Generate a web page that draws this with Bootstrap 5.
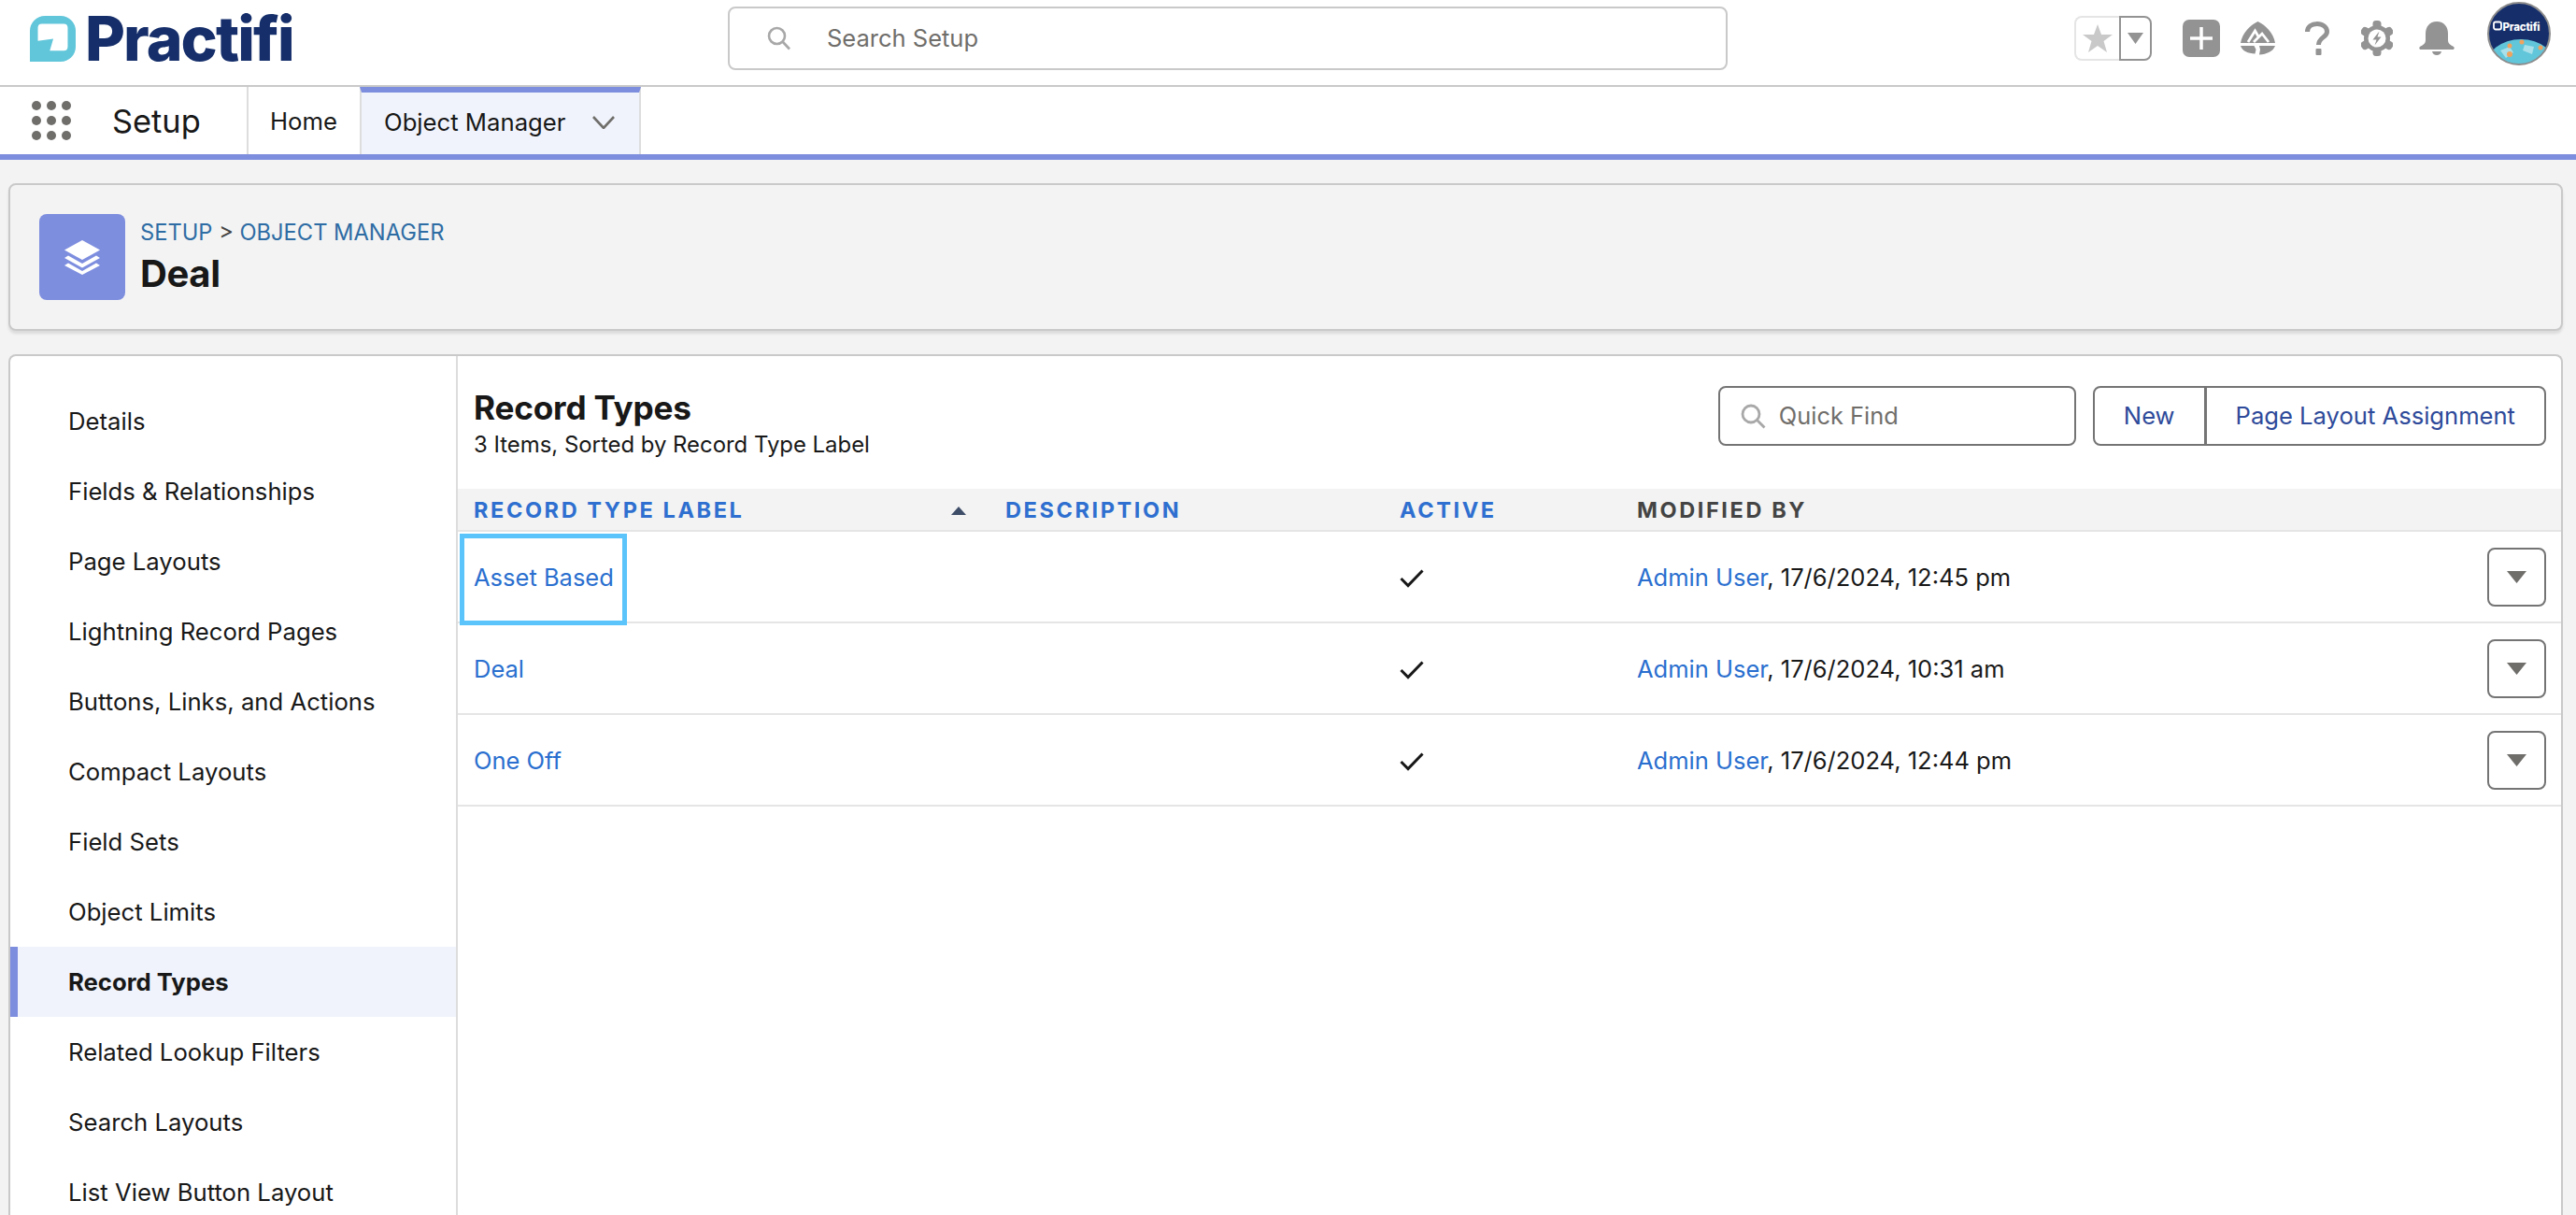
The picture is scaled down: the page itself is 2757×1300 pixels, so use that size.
<!DOCTYPE html>
<html lang="en">
<head>
<meta charset="utf-8">
<title>Record Types</title>
<link href="https://cdn.jsdelivr.net/npm/bootstrap@5.3.0/dist/css/bootstrap.min.css" rel="stylesheet">
<style>
html,body{height:1300px;overflow:hidden}
body{font-family:Inter,"Liberation Sans",sans-serif;font-size:25.700px;color:#181818;background:linear-gradient(#eceeef,#f3f3f3 120px,#f3f3f3);}
a{text-decoration:none}
.hdr-top{height:93px;padding-bottom:9px;background:#fff;border-bottom:2px solid #c9c9c9}
.logo-box{width:779px;padding-left:32px;gap:10px}
.logo-mark{width:49px;height:49px}
.logo-word{font-family:Inter,sans-serif;font-weight:800;font-size:66px;line-height:1;letter-spacing:-1.900px;color:#162f6b}
.search-box{width:1070px;height:68px;border:2px solid #c9c9c9;border-radius:8px;padding-left:40px;gap:38px;color:#706e6b;font-size:25.500px}
.search-box svg{width:26px;height:26px}
.hdr-icons{margin-left:auto;padding-right:27px}
.fav-group{width:83px;height:48px}
.fav-l{width:48px;border:2px solid #e5e5e5;border-right:0;border-radius:8px 0 0 8px}
.fav-r{width:35px;border:2px solid #939393;border-radius:0 8px 8px 0}
.ico-plus{margin-left:33px;width:40px;height:40px}
.ico-trail{margin-left:22px;width:37px;height:36px}
.ico-help{margin-left:32px;width:26px;height:36px}
.ico-gear{margin-left:34px;width:34px;height:38px}
.ico-bell{margin-left:28px;width:38px;height:36px}
.ico-avatar{margin-left:35px;width:68px;height:68px;margin-bottom:11px}
.hdr-nav{height:78px;background:#fff;border-bottom:6px solid #7e8edf}
.waffle{margin-left:34px;display:grid;grid-template-columns:repeat(3,10px);gap:6px;width:42px}
.waffle i{width:10px;height:10px;border-radius:50%;background:#706e6b;display:block}
.app-name{font-size:34.400px;margin-left:44px;width:144px;line-height:74px}
.tab-home{width:121px;border-left:2px solid #ddd;padding-left:23px;line-height:74px;color:#181818}
.tab-obj{width:301px;border-left:2px solid #ddd;border-right:2px solid #ddd;background:#f0f3fb;border-top:6px solid #7e8edf;padding-left:24px;padding-bottom:2px;color:#181818;line-height:64px}
.tab-obj svg{width:24px;height:14px;margin-left:28px}
.crumb-panel{margin:25px 14px 0 9px;height:158px;background:#f3f3f3;border:2px solid #c9c9c9;border-radius:8px;box-shadow:0 3px 3px rgba(0,0,0,.1);padding:31px;gap:16px}
.crumb-ico{width:92px;height:92px;background:#7e8edf;border-radius:8px}
.crumb-ico svg{width:38px;height:37px}
.crumb-line{font-size:23.700px;line-height:36px;color:#444;padding-top:2px}
.crumb-line a{color:#2e6ca4}
.crumb-title{font-size:40px;font-weight:700;line-height:48px;letter-spacing:-.4px;padding-top:2px}
.work-card{margin:25px 14px 0 9px;height:1000px;background:#fff;border:2px solid #c9c9c9;border-bottom:0;border-radius:8px 8px 0 0}
.side-col{width:479px;flex:none;border-right:2px solid #ddd;padding-top:32px}
.side-col .nav-link{height:75px;line-height:75px;padding:0 0 0 62px;color:#181818;font-size:25.700px}
.side-col .nav-link.cur{background:#f0f3fb;font-weight:700;box-shadow:inset 8px 0 0 #7e8edf}
.main-col{min-width:0;flex:1}
.main-head{padding:33px 16px 29px 17px}
.main-title{font-size:35.200px;font-weight:700;line-height:44px;letter-spacing:-.2px}
.main-sub{font-size:23.900px;line-height:36px}
.main-tools{gap:18px;margin-top:-1px}
.quick-find{width:383px;height:64px;border:2px solid #747474;border-radius:8px;padding-left:22px;gap:14px;background:#fff}
.quick-find svg{width:27px;height:27px;flex:none}
.quick-find input{border:0;outline:0;width:300px;font-size:25.400px;padding:0;color:#181818;background:transparent}
.quick-find input::placeholder{color:#706e6b;opacity:1}
.btn-group .tool-btn{height:64px;font-size:25.600px;border:2px solid #747474;border-radius:8px;background:#fff;color:#2e4a9a;padding:0 31px;line-height:60px}
.btn-group .tool-btn+.tool-btn{margin-left:-2px}
.rt-table{table-layout:fixed;width:100%;margin:0}
.rt-table.table>thead>tr>th{height:45px;padding:1px 0 0 17px;background:#f3f3f3;border-bottom:2px solid #e5e5e5;font-size:23.500px;font-weight:700;letter-spacing:2.600px;color:#2e6fd0;vertical-align:middle;position:relative;text-transform:uppercase}
.rt-table.table>thead>tr>th.dark{color:#444}
.rt-table.table>tbody>tr>td{height:98px;padding:2px 0 0 17px;border-bottom:2px solid #e5e5e5;font-size:25.500px;vertical-align:middle;color:#181818;position:relative}
.rt-table a{color:#2a6fcf}
.sort-tri{position:absolute;right:25px;top:19px;width:0;height:0;border:8px solid transparent;border-top:0;border-bottom:9px solid #3e4d68}
.focus-mark{position:absolute;left:2px;top:2px;width:179px;height:98px;border:5px solid #5bc4fa;pointer-events:none}
.chk{width:26px;height:20px;display:block;margin-top:2px}
.row-act{width:63px;height:63px;border:2px solid #747474;border-radius:8px;background:#fff;padding:0;margin:-2px 16px 0 0;flex:none}
.row-act svg{width:21px;height:13px;display:block;margin:auto}
.col-a{width:569px}.col-b{width:422px}.col-c{width:254px}
</style>
</head>
<body>
<header class="hdr-top d-flex align-items-center">
  <div class="logo-box d-flex align-items-center">
    <svg class="logo-mark" viewBox="0 0 46 46"><path fill="#61c6da" d="M15 0H31A15 15 0 0 1 46 15V31A15 15 0 0 1 31 46H0V15A15 15 0 0 1 15 0Z"/><path fill="#fff" d="M8 25V12Q8 8 12 8H34Q38 8 38 12V31Q38 35 34 35H20L23.500 23Z"/></svg>
    <span class="logo-word">Practifi</span>
  </div>
  <div class="search-box d-flex align-items-center">
    <svg viewBox="0 0 26 26" fill="none" stroke="#a8a8a8" stroke-width="2.600"><circle cx="10.500" cy="10.500" r="8.500"/><path d="M16.500 16.500L24 24.500"/></svg>
    <span>Search Setup</span>
  </div>
  <div class="hdr-icons d-flex align-items-center">
    <div class="fav-group d-flex">
      <div class="fav-l d-flex align-items-center justify-content-center"><svg width="32" height="31" viewBox="0 0 32 31"><path fill="#c9c9c9" d="M16 0L20 11H32L22.500 18L26 30L16 23L6 30L9.500 18L0 11H12Z"/></svg></div>
      <div class="fav-r d-flex align-items-center justify-content-center"><svg width="17" height="12" viewBox="0 0 17 12"><path fill="#939393" d="M0 0H17L8.500 12Z"/></svg></div>
    </div>
    <svg class="ico-plus" viewBox="0 0 40 40"><rect width="40" height="40" rx="7" fill="#939393"/><path d="M20 8V32M8 20H32" stroke="#fff" stroke-width="3.500"/></svg>
    <svg class="ico-trail" viewBox="0 0 37 36"><path fill="#939393" d="M18.500 0C27 4 35 12 37 23H0C2 12 10 4 18.500 0Z"/><path fill="#939393" d="M0 26H14.500L16.500 30L15.500 34.500C8 34 2 32 0 26ZM20 26H37C35 32 28 35 20 35.500L21 30Z"/><path fill="none" stroke="#fff" stroke-width="2.800" d="M8 22L15.500 10L19 16M14 22L23 13L30 22"/></svg>
    <svg class="ico-help" viewBox="0 0 26 36"><path fill="none" stroke="#939393" stroke-width="5" d="M2.500 11C2.500 5.500 7 2.500 13 2.500C19 2.500 23.500 6 23.500 11C23.500 17 14.500 17 14.500 25"/><rect x="11.500" y="29" width="6" height="7" rx="1" fill="#939393"/></svg>
    <svg class="ico-gear" viewBox="0 0 34 38"><g fill="#939393"><circle cx="17" cy="19" r="14"/><rect x="12.500" y="0" width="9" height="38" rx="3.500"/><rect x="12.500" y="0" width="9" height="38" rx="3.500" transform="rotate(60 17 19)"/><rect x="12.500" y="0" width="9" height="38" rx="3.500" transform="rotate(120 17 19)"/></g><circle cx="17" cy="19" r="9.500" fill="#fff"/><path fill="#939393" d="M19.500 11.500L12.500 20.500H16.500L14.500 26.500L21.500 17.500H17.500Z"/></svg>
    <svg class="ico-bell" viewBox="0 0 38 36"><path fill="#939393" d="M19 0C27 0 31 6 31 13V20C31 24 34 25 37 27C38.500 28.500 37.500 30 36 30H2C0.500 30 -.5 28.500 1 27C4 25 7 24 7 20V13C7 6 11 0 19 0Z"/><path fill="#939393" d="M14 32H24C23.500 34.500 21.500 36 19 36C16.500 36 14.500 34.500 14 32Z"/></svg>
    <svg class="ico-avatar" viewBox="0 0 68 68"><defs><clipPath id="ac"><circle cx="34" cy="34" r="33"/></clipPath></defs><circle cx="34" cy="34" r="33" fill="#162f6b"/><g clip-path="url(#ac)"><ellipse cx="36" cy="70" rx="38" ry="30" fill="#61c6da"/><path d="M14 52l10-4 4 6-8 6zM40 46l10 2-2 8-10-4z" fill="#a9e0ea"/><circle cx="24" cy="47" r="2.500" fill="#f0a35e"/><circle cx="37" cy="43" r="2.500" fill="#f0a35e"/><circle cx="24" cy="56" r="3" fill="#f0a35e"/><circle cx="57" cy="49" r="2.500" fill="#f0a35e"/></g><circle cx="34" cy="34" r="33" fill="none" stroke="#8c8c8c" stroke-width="2"/><rect x="7" y="21.500" width="8" height="8" rx="2" fill="none" stroke="#fff" stroke-width="1.800"/><text x="16.500" y="30.500" font-family="Inter,sans-serif" font-weight="800" font-size="11.500" fill="#fff" letter-spacing="-.2">Practifi</text></svg>
  </div>
</header>

<nav class="hdr-nav d-flex align-items-stretch">
  <div class="waffle align-self-center"><i></i><i></i><i></i><i></i><i></i><i></i><i></i><i></i><i></i></div>
  <div class="app-name">Setup</div>
  <a class="tab-home" href="#">Home</a>
  <a class="tab-obj d-flex align-items-center" href="#">Object Manager<svg viewBox="0 0 24 14" fill="none" stroke="#706e6b" stroke-width="2.600"><path d="M1 1L12 13L23 1"/></svg></a>
</nav>

<section class="crumb-panel d-flex">
  <div class="crumb-ico d-flex align-items-center justify-content-center flex-none">
    <svg viewBox="0 0 38 37"><path fill="#fff" d="M19 0L38 10.500L19 21L0 10.500Z"/><path fill="#fff" d="M4 16.500L19 25L34 16.500L38 19L19 29.500L0 19Z"/><path fill="#fff" d="M4 24.500L19 33L34 24.500L38 27L19 37L0 27Z"/></svg>
  </div>
  <div>
    <div class="crumb-line"><a href="#">SETUP</a> &gt; <a href="#">OBJECT MANAGER</a></div>
    <div class="crumb-title">Deal</div>
  </div>
</section>

<section class="work-card d-flex">
  <aside class="side-col">
    <div class="nav flex-column">
      <a class="nav-link" href="#">Details</a>
      <a class="nav-link" href="#">Fields &amp; Relationships</a>
      <a class="nav-link" href="#">Page Layouts</a>
      <a class="nav-link" href="#">Lightning Record Pages</a>
      <a class="nav-link" href="#">Buttons, Links, and Actions</a>
      <a class="nav-link" href="#">Compact Layouts</a>
      <a class="nav-link" href="#">Field Sets</a>
      <a class="nav-link" href="#">Object Limits</a>
      <a class="nav-link cur" href="#">Record Types</a>
      <a class="nav-link" href="#">Related Lookup Filters</a>
      <a class="nav-link" href="#">Search Layouts</a>
      <a class="nav-link" href="#">List View Button Layout</a>
    </div>
  </aside>
  <main class="main-col">
    <div class="main-head d-flex justify-content-between align-items-start">
      <div>
        <div class="main-title">Record Types</div>
        <div class="main-sub">3 Items, Sorted by Record Type Label</div>
      </div>
      <div class="main-tools d-flex">
        <label class="quick-find d-flex align-items-center mb-0">
          <svg viewBox="0 0 27 27" fill="none" stroke="#a8a8a8" stroke-width="2.800"><circle cx="11" cy="11" r="9"/><path d="M17.500 17.500L25.500 25.500"/></svg>
          <input type="text" placeholder="Quick Find">
        </label>
        <div class="btn-group">
          <a class="btn tool-btn" href="#">New</a>
          <a class="btn tool-btn" href="#">Page Layout Assignment</a>
        </div>
      </div>
    </div>
    <table class="table rt-table">
      <colgroup><col class="col-a"><col class="col-b"><col class="col-c"><col></colgroup>
      <thead>
        <tr><th>Record Type Label<span class="sort-tri"></span></th><th>Description</th><th>Active</th><th class="dark">Modified By</th></tr>
      </thead>
      <tbody>
        <tr>
          <td><a href="#">Asset Based</a><span class="focus-mark"></span></td><td></td>
          <td><svg class="chk" viewBox="0 0 26 20" fill="none" stroke="#181818" stroke-width="3"><path d="M1.500 10L9 17.500L24.500 1.500"/></svg></td>
          <td><div class="d-flex align-items-center justify-content-between"><span><a href="#">Admin User</a>, 17/6/2024, 12:45 pm</span><button class="row-act" type="button" aria-label="Show actions"><svg viewBox="0 0 21 13"><path fill="#706e6b" d="M0 0H21L10.500 13Z"/></svg></button></div></td>
        </tr>
        <tr>
          <td><a href="#">Deal</a></td><td></td>
          <td><svg class="chk" viewBox="0 0 26 20" fill="none" stroke="#181818" stroke-width="3"><path d="M1.500 10L9 17.500L24.500 1.500"/></svg></td>
          <td><div class="d-flex align-items-center justify-content-between"><span><a href="#">Admin User</a>, 17/6/2024, 10:31 am</span><button class="row-act" type="button" aria-label="Show actions"><svg viewBox="0 0 21 13"><path fill="#706e6b" d="M0 0H21L10.500 13Z"/></svg></button></div></td>
        </tr>
        <tr>
          <td><a href="#">One Off</a></td><td></td>
          <td><svg class="chk" viewBox="0 0 26 20" fill="none" stroke="#181818" stroke-width="3"><path d="M1.500 10L9 17.500L24.500 1.500"/></svg></td>
          <td><div class="d-flex align-items-center justify-content-between"><span><a href="#">Admin User</a>, 17/6/2024, 12:44 pm</span><button class="row-act" type="button" aria-label="Show actions"><svg viewBox="0 0 21 13"><path fill="#706e6b" d="M0 0H21L10.500 13Z"/></svg></button></div></td>
        </tr>
      </tbody>
    </table>
  </main>
</section>
<script src="https://cdn.jsdelivr.net/npm/bootstrap@5.3.0/dist/js/bootstrap.bundle.min.js"></script>
</body>
</html>
